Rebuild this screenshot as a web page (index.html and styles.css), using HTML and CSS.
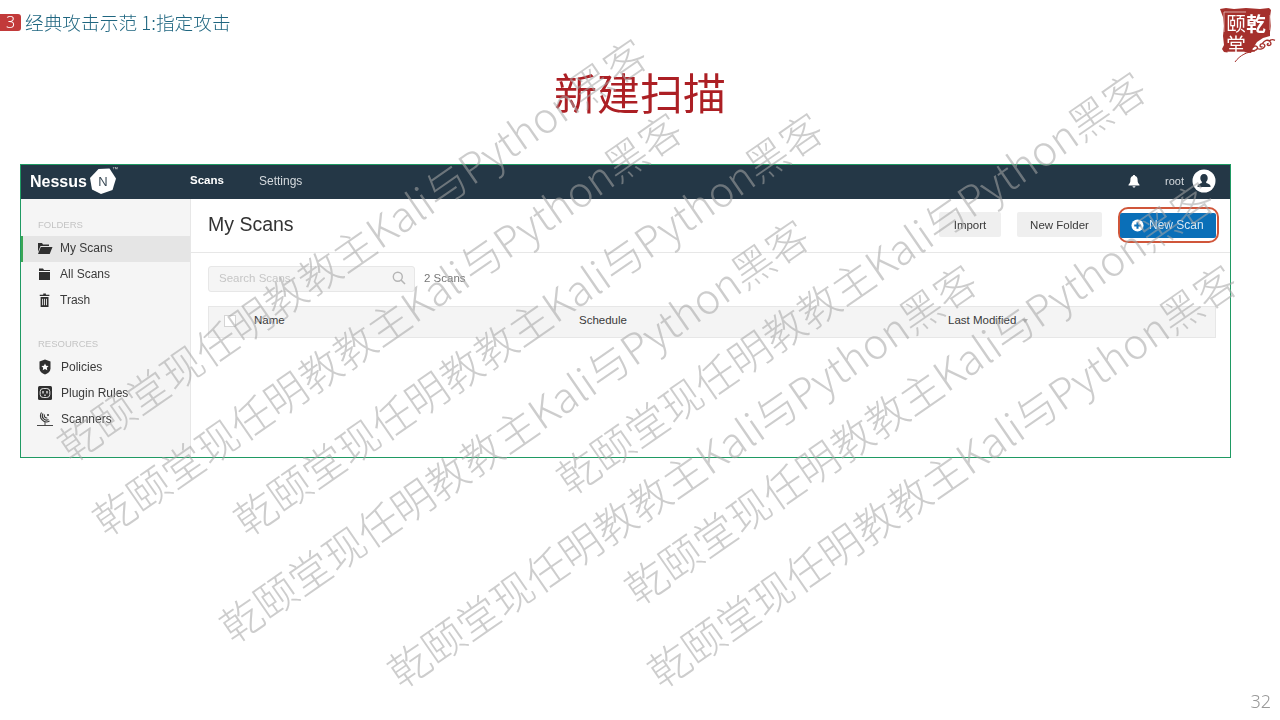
FILE: index.html
```html
<!DOCTYPE html>
<html lang="zh">
<head>
<meta charset="utf-8">
<title>新建扫描</title>
<link rel="stylesheet" href="styles.css">
</head>
<body>
<div class="slide">
  <header class="top">
    <div class="crumb"><span class="num">3</span><span class="crumb-text">经典攻击示范 1:指定攻击</span></div>
    <div class="seal">
      <svg class="seal-bg" viewBox="0 0 57 57"><path d="M1 3l6-1 8 1 12-1 14 1 9-1 2 2-1 7 1 9-1 6 0 4-7 2-6 4-4 6-2 5-8-1-12 1-7-1-2-3 2-4-1-9 1-10-1-9z" fill="#a5302c"/><path d="M5 26V6h22M51 9v15" fill="none" stroke="#e9c9c7" stroke-width=".8"/><path d="M16 56C21 49 28 46 36 45" fill="none" stroke="#a5302c" stroke-width="1"/></svg>
      <div class="seal-grid"><span class="seal-c">颐</span><span class="seal-c c2">乾</span><span class="seal-c">堂</span></div>
      <svg class="seal-cloud" viewBox="0 0 26 16"><path d="M1 12c2 3 6 2 7 0s-3-4-4-1M8 12c3 1 6 0 7-2s-2-4-4-2c-1 2 1 3 2 2M13 7c2-3 5-4 7-2s1 4-1 4-2-2 0-2M19 5c2-2 4-2 6-1" fill="none" stroke="#a5302c" stroke-width="1.300"/></svg>
    </div>
  </header>
  <h1 class="title">新建扫描</h1>

  <section class="app">
    <nav class="nav">
      <div class="brand"><span class="brand-name">Nessus</span>
        <svg class="brand-hex" viewBox="0 0 26 26"><path d="M8.500 1L19.500 .5 26 10.500 22.500 22 11 26 2 21.500 0 10z" fill="#fff"/></svg>
        <span class="brand-n">N</span><span class="brand-tm">™</span>
      </div>
      <a class="nav-link nav-active">Scans</a>
      <a class="nav-link">Settings</a>
      <div class="nav-right">
        <svg class="bell" viewBox="0 0 14 14"><path d="M7 1c.8 0 1.200.5 1.200 1C10 2.600 10.600 4 10.600 6c0 2.500.7 3.600 1.900 4.700v.8H1.500v-.8C2.700 9.600 3.400 8.500 3.400 6c0-2 .6-3.400 2.400-4 0-.5.4-1 1.200-1zM5.500 12.200h3C8.400 13 7.800 13.500 7 13.500S5.600 13 5.500 12.200z" fill="#fff"/></svg>
        <span class="user">root</span>
        <svg class="avatar" viewBox="0 0 24 24"><circle cx="12" cy="12" r="11.500" fill="#fff"/><path d="M12 5c2.400 0 3.700 1.800 3.700 4 0 1.600-.6 3-1.500 3.800v1.200c2 .8 4.300 1.300 4.300 3.300v.7h-13v-.7c0-2 2.300-2.500 4.300-3.300v-1.200C9 12 8.300 10.600 8.300 9c0-2.200 1.300-4 3.700-4z" fill="#243746"/></svg>
      </div>
    </nav>
    <div class="body">
      <aside class="side">
        <div class="side-head">FOLDERS</div>
        <div class="side-item active">
          <svg class="ico" viewBox="0 0 16 14"><path d="M1 2h4l1 1.500h6V5H3.500L1 11zM3.800 6H15.500l-2.800 7H1z" fill="#2f2f2f"/></svg>
          <span>My Scans</span></div>
        <div class="side-item">
          <svg class="ico" viewBox="0 0 16 14"><path d="M2 1.500h4l1 1.500h6v1H2zM2 5h11v8H2z" fill="#2f2f2f"/></svg>
          <span>All Scans</span></div>
        <div class="side-item">
          <svg class="ico" viewBox="0 0 16 16"><path d="M6 .5h3v1.500h4V3.500H2V2h4zM3 4.500h9V16H3zM4.800 6.500v7.500h1V6.500zm2.200 0v7.500h1V6.500zm2.200 0v7.500h1V6.500z" fill="#2f2f2f" fill-rule="evenodd"/></svg>
          <span>Trash</span></div>
        <div class="side-head res">RESOURCES</div>
        <div class="side-item wide">
          <svg class="ico" viewBox="0 0 16 16"><path d="M8 .5l5.500 2v7c0 3-2.500 5-5.500 6-3-1-5.500-3-5.500-6v-7z" fill="#2f2f2f"/><path d="M8 4.500l1.100 2.300 2.500.3-1.800 1.700.5 2.500L8 10.100l-2.300 1.200.5-2.500-1.800-1.700 2.500-.3z" fill="#fff"/></svg>
          <span>Policies</span></div>
        <div class="side-item wide">
          <svg class="ico" viewBox="0 0 16 16"><rect x="1" y="1" width="14" height="14" rx="1.500" fill="#2f2f2f"/><rect x="3.200" y="3.500" width="9.600" height="9" rx="3" fill="none" stroke="#ddd"/><path d="M6 6v2.500M10 6v2.500M8 9.500v1.500" stroke="#ddd" stroke-width="1.400"/></svg>
          <span>Plugin Rules</span></div>
        <div class="side-item wide">
          <svg class="ico" viewBox="0 0 16 16"><path d="M4.500 1.500a6 6 0 0 0 8 8.500M6 2.500a4.200 4.200 0 0 0 5.500 6M7.500 3.500a2.500 2.500 0 0 0 2.800 3.500" fill="none" stroke="#333" stroke-width="1.100"/><circle cx="11" cy="4" r="1" fill="#333"/><path d="M8 11v3.500M0 14.500h16" stroke="#333" stroke-width=".9"/></svg>
          <span>Scanners</span></div>
      </aside>
      <main class="main">
        <div class="main-head">
          <h2 class="main-title">My Scans</h2>
          <button class="btn btn-import">Import</button>
          <button class="btn btn-folder">New Folder</button>
          <div class="ring">
            <button class="btn btn-primary">
              <svg class="plus" viewBox="0 0 14 14"><circle cx="7" cy="7" r="6.500" fill="#fff"/><path d="M7 3.500v7M3.500 7h7" stroke="#0a6fb8" stroke-width="2.200"/></svg>
              New Scan</button>
          </div>
        </div>
        <div class="search-row">
          <div class="search"><span>Search Scans</span>
            <svg class="mag" viewBox="0 0 14 14"><circle cx="5.800" cy="5.800" r="4.500" fill="none" stroke="#b5b5b5" stroke-width="1.400"/><path d="M9 9l4 4" stroke="#b5b5b5" stroke-width="1.600"/></svg>
          </div>
          <span class="count">2 Scans</span>
        </div>
        <div class="table-head">
          <span class="check"></span>
          <span class="col col-name">Name</span>
          <span class="col col-sched">Schedule</span>
          <span class="col col-mod">Last Modified <i class="sort"></i></span>
        </div>
      </main>
    </div>
  </section>

  <footer class="foot">32</footer>

  <div class="wm w1">乾颐堂现任明教教主Kali与Python黑客</div>
  <div class="wm w2">乾颐堂现任明教教主Kali与Python黑客</div>
  <div class="wm w3">乾颐堂现任明教教主Kali与Python黑客</div>
  <div class="wm w4">乾颐堂现任明教教主Kali与Python黑客</div>
  <div class="wm w5">乾颐堂现任明教教主Kali与Python黑客</div>
  <div class="wm w6">乾颐堂现任明教教主Kali与Python黑客</div>
  <div class="wm w7">乾颐堂现任明教教主Kali与Python黑客</div>
  <div class="wm w8">乾颐堂现任明教教主Kali与Python黑客</div>
</div>
</body>
</html>
```
FILE: styles.css
```css
* { box-sizing: border-box; }
html, body { margin: 0; padding: 0; }
body { background: #fff; font-family: "Liberation Sans", "Noto Sans CJK SC", sans-serif; overflow: hidden; }
.slide { position: relative; width: 1280px; height: 720px; overflow: hidden; display: flex; flex-direction: column; filter: blur(.35px); }

.top { display: flex; justify-content: space-between; height: 64px; flex: none; padding-top: 6px; padding-right: 4px; }
.crumb { display: flex; align-items: flex-start; height: 32px; }
.num { width: 21px; height: 17px; margin-top: 8px; background: #c23a3a; color: #fff; font-size: 16px; line-height: 17px; text-align: center; border-radius: 0 3px 3px 0; font-family: "Noto Sans", sans-serif; font-weight: 300; }
.crumb-text { margin-left: 4px; font-family: "Noto Sans CJK SC", sans-serif; font-weight: 300; font-size: 18.700px; line-height: 32px; color: #1f6680; }
.seal { position: relative; width: 57px; height: 57px; }
.seal-bg { display: block; width: 57px; height: 57px; }
.seal-grid { position: absolute; left: 7px; top: 6px; display: grid; grid-template-columns: 20px 20px; grid-auto-rows: 21px; }
.seal-c { display: block; color: #fff; font-family: "Noto Sans CJK SC", sans-serif; font-size: 19.500px; line-height: 21px; text-align: center; font-weight: 400; }
.c2 { font-weight: 700; }
.seal-cloud { position: absolute; left: 30px; top: 30px; width: 27px; height: 17px; }

.title { margin: 0; height: 100px; flex: none; text-align: center; color: #ac1f24; font-family: "Noto Sans CJK SC", sans-serif; font-weight: 400; font-size: 43px; line-height: 55px; }

.app { flex: none; width: 1211px; height: 294px; margin-left: 20px; border: 1px solid #1f9a63; display: flex; flex-direction: column; background: #fff; }
.nav { height: 34px; flex: none; background: #243746; display: flex; align-items: center; color: #fff; }
.brand { position: relative; width: 169px; height: 100%; display: flex; align-items: center; padding-left: 9px; }
.brand-name { font-size: 16px; font-weight: 700; color: #fff; }
.brand-hex { position: absolute; left: 69px; top: 3px; width: 26px; height: 26px; }
.brand-n { position: absolute; left: 69px; top: 3px; width: 26px; height: 26px; color: #3a4a56; font-size: 13px; line-height: 28px; text-align: center; }
.brand-tm { position: absolute; left: 91px; top: 1px; font-size: 6px; color: #ddd; }
.nav-link { font-size: 12px; color: #d5dade; width: 69px; position: relative; top: -1px; }
.nav-active { font-weight: 700; color: #fff; font-size: 11.500px; top: -2px; }
.nav-right { margin-left: auto; display: flex; align-items: center; padding-right: 14px; position: relative; top: -1px; }
.bell { width: 14px; height: 14px; }
.user { font-size: 11px; color: #d5dade; margin-left: 23px; position: relative; left: 1px; }
.avatar { width: 24px; height: 24px; margin-left: 9px; }

.body { flex: 1; display: flex; min-height: 0; }
.side { width: 170px; flex: none; background: #f5f5f5; border-right: 1px solid #e7e7e7; padding-top: 20px; }
.side-head { font-size: 9.500px; line-height: 11px; color: #c4c4c4; padding-left: 17px; margin-bottom: 6px; }
.side-head.res { margin-top: 24px; margin-bottom: 6px; padding-top: 0; }
.side-item { display: flex; align-items: center; height: 26px; padding-left: 16px; padding-bottom: 2px; font-size: 12px; color: #3a3a3a; }
.side-item.active { background: #e5e5e5; box-shadow: inset 2px 0 0 #3aa655; }
.side-item .ico { width: 16px; height: 14px; margin-right: 7px; flex: none; }
.side-item.wide .ico { height: 16px; margin-right: 8px; }

.main { flex: 1; min-width: 0; padding: 0; }
.main-head { position: relative; height: 54px; border-bottom: 1px solid #e7e7e7; display: flex; align-items: center; padding-left: 17px; }
.main-title { margin: 0; font-weight: 400; font-size: 19.500px; color: #333; flex: 1; position: relative; top: -1px; }
.btn { border: 0; height: 25px; border-radius: 2px; background: #efefef; color: #3a3a3a; font: 11.500px "Liberation Sans", sans-serif; padding: 0; }
.btn-import { width: 62px; margin-right: 16px; position: relative; top: -1px; }
.btn-folder { width: 85px; margin-right: 16px; position: relative; top: -1px; }
.ring { border: 2px solid #d0563a; border-radius: 10px; padding: 4px 1px 3px 0; margin-right: 11px; display: flex; position: relative; top: -1px; }
.btn-primary { width: 96px; background: #0a6fb8; color: #d8e8f4; font-size: 12px; display: flex; align-items: center; padding-left: 11px; gap: 5px; }
.plus { width: 13px; height: 13px; }

.search-row { display: flex; align-items: center; padding: 13px 0 0 17px; }
.search { width: 207px; height: 26px; border: 1px solid #e7e7e7; border-radius: 3px; background: #f5f5f5; color: #c6c6c6; font-size: 11.500px; padding-left: 10px; padding-bottom: 2px; display: flex; align-items: center; justify-content: space-between; padding-right: 8px; }
.mag { width: 14px; height: 14px; }
.count { margin-left: 9px; font-size: 11.500px; color: #777; position: relative; top: -1px; }
.table-head { position: relative; display: flex; align-items: center; margin: 14px 14px 0 17px; height: 32px; background: #f4f4f4; border: 1px solid #e7e7e7; font-size: 11.500px; color: #3a3a3a; }
.check { width: 12px; height: 12px; background: #fff; border: 1px solid #d5d5d5; margin-left: 15px; margin-top: -2px; }
.col { margin-top: -4px; }
.col-name { margin-left: 18px; width: 325px; }
.col-sched { width: 369px; }
.sort { display: inline-block; width: 0; height: 0; border-left: 3px solid transparent; border-right: 3px solid transparent; border-top: 4px solid #b5b5b5; margin-left: 2px; vertical-align: middle; }

.foot { position: absolute; right: 9px; bottom: 9px; font-size: 18px; line-height: 20px; color: #999; font-family: "Noto Sans", sans-serif; font-weight: 300; }

.wm { position: absolute; white-space: nowrap; font-family: "Noto Sans CJK SC", sans-serif; font-weight: 300; font-size: 41.700px; line-height: 50px; color: rgba(165,165,165,.56); transform-origin: 0 50%; transform: rotate(-34.700deg); pointer-events: none; }
.w1 { left: 61px; top: 424px; }
.w2 { left: 96px; top: 498px; }
.w3 { left: 237px; top: 498px; }
.w4 { left: 223px; top: 605px; }
.w5 { left: 391px; top: 650px; }
.w6 { left: 560px; top: 457px; }
.w7 { left: 628px; top: 567px; }
.w8 { left: 651px; top: 650px; }
```
